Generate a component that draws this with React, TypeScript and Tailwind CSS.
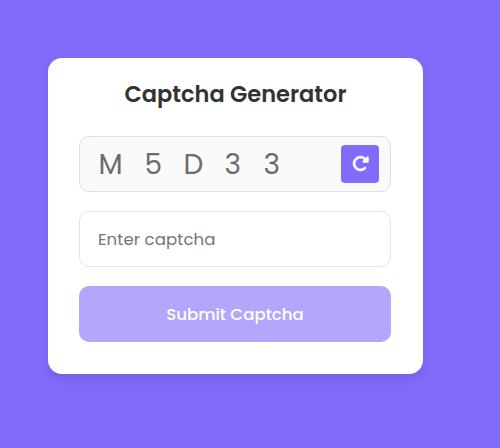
import { FaRotateRight } from "react-icons/fa6";

export default function App() {
  return (
    <div className="h-[448px] w-full overflow-hidden bg-[#826afb] pl-12 pt-[58px] [font-family:Poppins,Inter,sans-serif]">
      <main className="flex h-[316px] w-[375px] flex-col rounded-[14px] bg-white px-[31px] pt-[19px] shadow-[0_5px_10px_rgba(0,0,0,0.1)]">
        <h1 className="h-[34px] text-center text-[22.5px] font-semibold leading-[34px] text-[#333]">
          Captcha Generator
        </h1>
        <div className="mt-[25px] flex h-14 w-[312px] items-center justify-between rounded-[10px] border border-[#dfdfdf] bg-[#fafafa] pl-[18.5px] pr-[11px]">
          <div className="flex pt-px text-[28px] font-normal leading-none text-[#6c6c6c]">
            <span className="w-[46px]">M</span>
            <span className="w-[39px]">5</span>
            <span className="w-[41px]">D</span>
            <span className="w-[39px]">3</span>
            <span>3</span>
          </div>
          <button className="flex size-[38px] items-center justify-center rounded bg-[#826afb] pb-px text-[17px] text-white" aria-label="Refresh captcha">
            <FaRotateRight className="stroke-white [stroke-width:18]" />
          </button>
        </div>
        <input
          className="mt-[19px] h-14 w-[312px] rounded-[10px] border border-[#e4e4e4] bg-white px-[18px] text-[16.6px] tracking-[0.08px] outline-none placeholder:text-[#757575]"
          placeholder="Enter captcha"
        />
        <button className="mt-[19px] h-14 w-[312px] rounded-[10px] bg-[#b4a6fd] pt-0.5 text-[16.6px] font-medium text-white">
          Submit Captcha
        </button>
      </main>
    </div>
  );
}
